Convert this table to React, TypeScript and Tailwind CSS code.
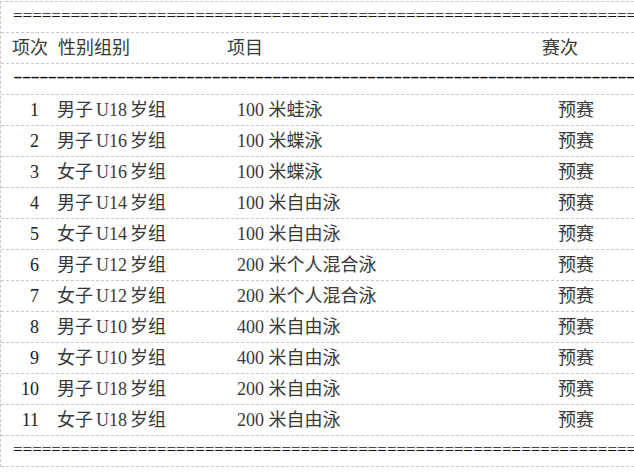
const rows = [
  { no: '1', group: '男子 U18 岁组', event: '100 米蛙泳', round: '预赛' },
  { no: '2', group: '男子 U16 岁组', event: '100 米蝶泳', round: '预赛' },
  { no: '3', group: '女子 U16 岁组', event: '100 米蝶泳', round: '预赛' },
  { no: '4', group: '男子 U14 岁组', event: '100 米自由泳', round: '预赛' },
  { no: '5', group: '女子 U14 岁组', event: '100 米自由泳', round: '预赛' },
  { no: '6', group: '男子 U12 岁组', event: '200 米个人混合泳', round: '预赛' },
  { no: '7', group: '女子 U12 岁组', event: '200 米个人混合泳', round: '预赛' },
  { no: '8', group: '男子 U10 岁组', event: '400 米自由泳', round: '预赛' },
  { no: '9', group: '女子 U10 岁组', event: '400 米自由泳', round: '预赛' },
  { no: '10', group: '男子 U18 岁组', event: '200 米自由泳', round: '预赛' },
  { no: '11', group: '女子 U18 岁组', event: '200 米自由泳', round: '预赛' }
];

const rowCls = 'flex h-[31px] border-b border-dashed border-[#c8c8c8] leading-[30px] whitespace-nowrap overflow-hidden';

function DoubleRule() {
  return (
    <div className={rowCls}>
      <span className="pl-[12px] text-[17px] text-[#111] -translate-y-[1px]">{'='.repeat(72)}</span>
    </div>
  );
}

function SingleRule() {
  return (
    <div className={rowCls}>
      <span className="pl-[12px]">
        <span className="inline-block origin-left scale-x-[1.6] -translate-y-[3px] tracking-[-0.6px] text-[#111]">
          {'-'.repeat(80)}
        </span>
      </span>
    </div>
  );
}

export default function App() {
  return (
    <div className="w-[634px] h-[472px] bg-white overflow-hidden pt-px font-['Liberation_Serif','Noto_Sans_CJK_SC',serif] text-[18px] text-[#383838]">
      <div className="border-t border-l border-dashed border-[#c8c8c8]">
        <DoubleRule />

        {/* 表头 */}
        <div className={rowCls}>
          <span className="w-[57px] shrink-0 pl-[11px]">项次</span>
          <span className="w-[169px] shrink-0">性别组别</span>
          <span className="w-[315px] shrink-0">项目</span>
          <span>赛次</span>
        </div>

        <SingleRule />

        {rows.map((r) => (
          <div key={r.no} className={rowCls}>
            <span className="w-[38px] shrink-0 text-right text-[#222]">{r.no}</span>
            <span className="w-[18px] shrink-0" />
            <span className="w-[180px] shrink-0 [word-spacing:-1.5px]">{r.group}</span>
            <span className="w-[321px] shrink-0">{r.event}</span>
            <span>{r.round}</span>
          </div>
        ))}

        <DoubleRule />
      </div>
    </div>
  );
}
